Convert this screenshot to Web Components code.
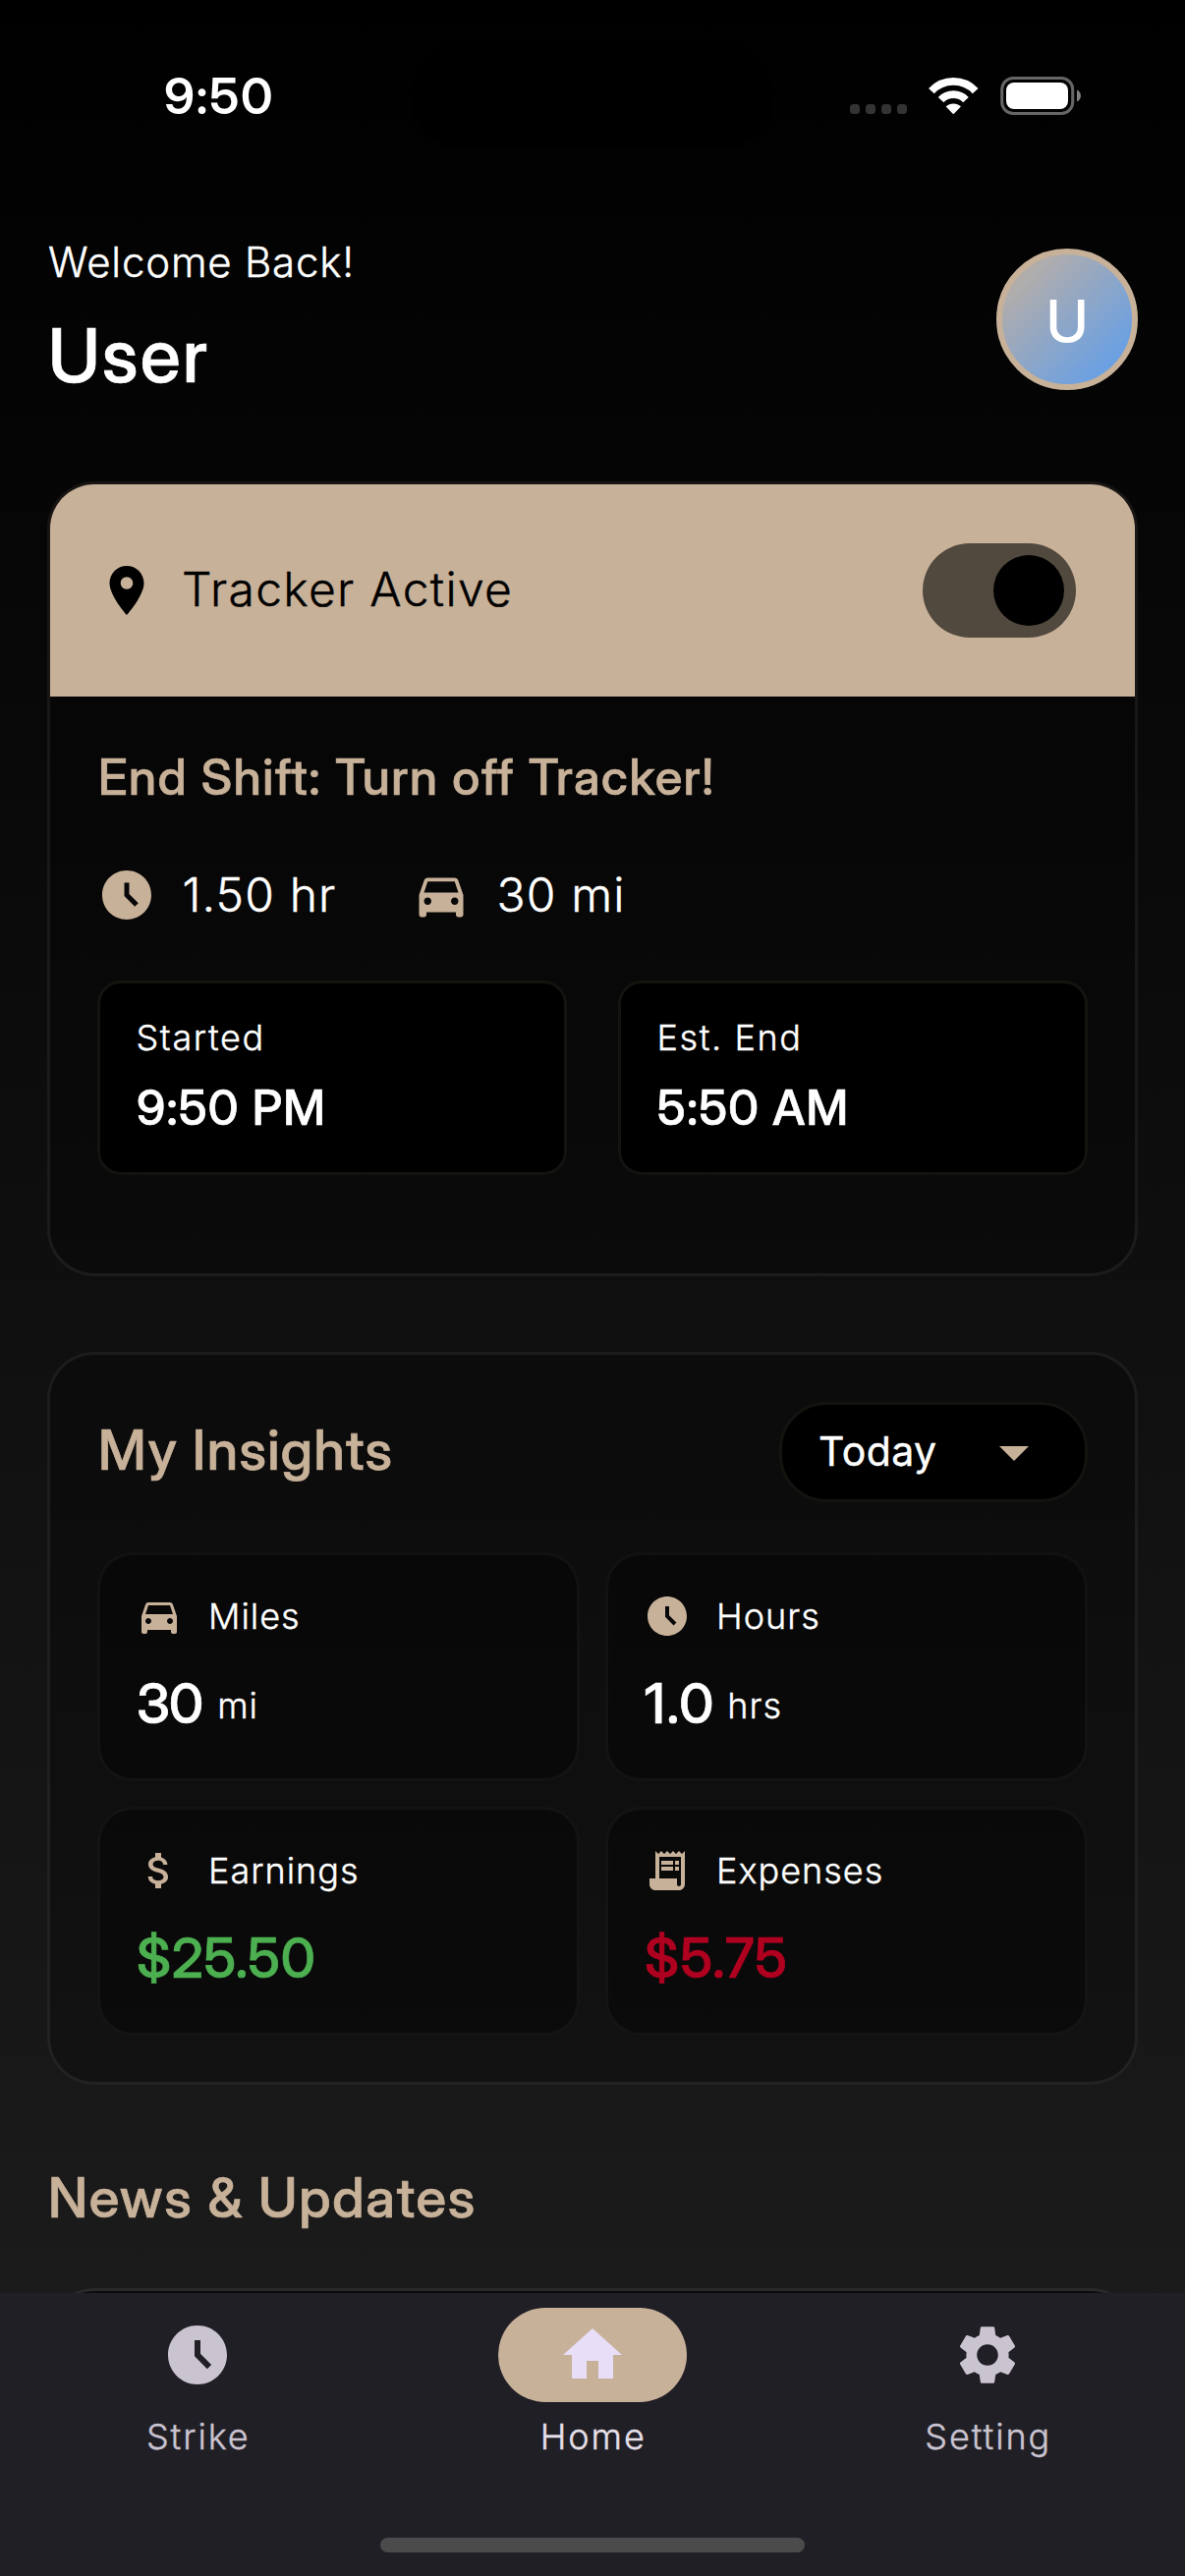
<!DOCTYPE html>
<html lang="en">
<head>
<meta charset="utf-8">
<title>Shift Tracker</title>
<style>
html,body{margin:0;padding:0;background:#000}
body{width:1206px;height:2622px;overflow:hidden;font-family:"Inter Display",Inter,"Liberation Sans",sans-serif;color:#fff;
--tan:#c8b199;--line:rgba(200,177,153,.1);--text:Inter,"Liberation Sans",sans-serif;--stroke:.4px currentColor}
</style>
</head>
<body>
<home-screen></home-screen>
<script>
const define=(name,html)=>customElements.define(name,class extends HTMLElement{
  connectedCallback(){
    if(this.shadowRoot)return;
    const t=document.createElement('template');
    t.innerHTML=typeof html==='function'?html(this):html;
    this.attachShadow({mode:'open'}).append(t.content.cloneNode(true));
  }
});

const ICONS={
  place:'M12 2C8.13 2 5 5.13 5 9c0 5.25 7 13 7 13s7-7.75 7-13c0-3.87-3.13-7-7-7zm0 9.5c-1.38 0-2.5-1.12-2.5-2.5s1.12-2.5 2.5-2.5 2.5 1.12 2.5 2.5-1.12 2.5-2.5 2.5z',
  clock:'M11.99 2C6.47 2 2 6.48 2 12s4.47 10 9.99 10C17.52 22 22 17.52 22 12S17.52 2 11.99 2zm3.3 14.71L11 12.41V7h2v4.59l3.71 3.71-1.42 1.41z',
  car:'M18.92 6.01C18.72 5.42 18.16 5 17.5 5h-11c-.66 0-1.21.42-1.42 1.01L3 12v8c0 .55.45 1 1 1h1c.55 0 1-.45 1-1v-1h12v1c0 .55.45 1 1 1h1c.55 0 1-.45 1-1v-8l-2.08-5.99zM6.5 16c-.83 0-1.5-.67-1.5-1.5S5.67 13 6.5 13s1.5.67 1.5 1.5S7.33 16 6.5 16zm11 0c-.83 0-1.5-.67-1.5-1.5s.67-1.5 1.5-1.5 1.5.67 1.5 1.5-.67 1.5-1.5 1.5zM5 11l1.5-4.5h11L19 11H5z',
  dollar:'M11.8 10.9c-2.27-.59-3-1.2-3-2.15 0-1.09 1.01-1.85 2.7-1.85 1.78 0 2.44.85 2.5 2.1h2.21c-.07-1.72-1.12-3.3-3.21-3.81V3h-3v2.16c-1.94.42-3.5 1.68-3.5 3.61 0 2.31 1.91 3.46 4.7 4.13 2.5.6 3 1.48 3 2.41 0 .69-.49 1.79-2.7 1.79-2.06 0-2.87-.92-2.98-2.1h-2.2c.12 2.19 1.76 3.42 3.68 3.83V21h3v-2.15c1.95-.37 3.5-1.5 3.5-3.55 0-2.84-2.43-3.81-4.7-4.4z',
  receipt:'M19.5 3.5L18 2l-1.5 1.5L15 2l-1.5 1.5L12 2l-1.5 1.5L9 2 7.5 3.5 6 2v14H3v3c0 1.66 1.34 3 3 3h12c1.66 0 3-1.34 3-3V2l-1.5 1.5zM19 19c0 .55-.45 1-1 1s-1-.45-1-1v-3H8V5h11v14zM9 7h6v2H9zM16 7h2v2h-2zM9 10h6v2H9zM16 10h2v2h-2z',
  home:'M10 20v-6h4v6h5v-8h3L12 3 2 12h3v8z',
  settings:'M19.14 12.94c.04-.3.06-.61.06-.94 0-.32-.02-.64-.07-.94l2.03-1.58c.18-.14.23-.41.12-.61l-1.92-3.32c-.12-.22-.37-.29-.59-.22l-2.39.96c-.5-.38-1.03-.7-1.62-.94l-.36-2.54c-.04-.24-.24-.41-.48-.41h-3.84c-.24 0-.43.17-.47.41l-.36 2.54c-.59.24-1.13.57-1.62.94l-2.39-.96c-.22-.08-.47 0-.59.22L2.74 8.87c-.12.21-.08.47.12.61l2.03 1.58c-.05.3-.09.63-.09.94s.02.64.07.94l-2.03 1.58c-.18.14-.23.41-.12.61l1.92 3.32c.12.22.37.29.59.22l2.39-.96c.5.38 1.03.7 1.62.94l.36 2.54c.05.24.24.41.48.41h3.84c.24 0 .44-.17.47-.41l.36-2.54c.59-.24 1.13-.56 1.62-.94l2.39.96c.22.08.47 0 .59-.22l1.92-3.32c.12-.22.07-.47-.12-.61l-2.01-1.58zM12 15.6c-1.98 0-3.6-1.62-3.6-3.6s1.62-3.6 3.6-3.6 3.6 1.62 3.6 3.6-1.62 3.6-3.6 3.6z',
  drop:'M7 10l5 5 5-5z'
};

const TEXT='font-family:var(--text);font-weight:300;-webkit-text-stroke:var(--stroke);';
const HEAD='font-weight:500;-webkit-text-stroke:.7px currentColor;';

define('app-icon',el=>`<style>:host{display:block;flex:none;width:${el.getAttribute('size')}px;height:${el.getAttribute('size')}px}svg{display:block;width:100%;height:100%}</style>
<svg viewBox="0 0 24 24"><path fill="currentColor" fill-rule="evenodd" d="${ICONS[el.getAttribute('name')]}"/></svg>`);

define('status-bar',`<style>
:host{display:flex;height:236px;align-items:flex-start}
.l,.r{height:196px;display:flex;align-items:center;box-sizing:border-box}
.l{width:417px;padding-left:167px;font-weight:600;font-size:51px;line-height:60px;letter-spacing:1.6px}
.i{width:371px;height:110px;margin-top:42px;border-radius:55px;background:#000}
.r{padding-left:77px}
svg{display:block}
</style>
<div class="l">9:50</div><div class="i"></div>
<div class="r"><svg width="240" height="42" viewBox="0 0 240 42">
<g fill="#333"><rect x="0" y="29" width="10" height="10" rx="3.5"/><rect x="16" y="29" width="10" height="10" rx="3.5"/><rect x="32" y="29" width="10" height="10" rx="3.5"/><rect x="48" y="29" width="10" height="10" rx="3.5"/></g>
<g fill="none" stroke="#fff" stroke-width="7.8"><path d="M82.9 15.6A30.6 30.6 0 0 1 127.7 15.6"/><path d="M92.6 24.6A17.6 17.6 0 0 1 118 24.6"/></g>
<path fill="#fff" d="M97.7 31.6A10.6 10.6 0 0 1 112.9 31.6L105.9 38.7Q105.3 39.2 104.7 38.7Z"/>
<rect x="154.7" y="2.5" width="72" height="36" rx="11.5" fill="none" stroke="#666" stroke-width="3"/>
<rect x="159" y="7" width="63" height="27" rx="8" fill="#fff"/>
<path fill="#808080" d="M231 14.500c5.300 2.400 5.300 9.600 0 12z"/></svg></div>`);

define('user-avatar',`<style>
:host{display:flex;align-items:center;justify-content:center;box-sizing:border-box;width:144px;height:144px;padding-top:3px;border-radius:50%;border:6px solid var(--tan);
background:linear-gradient(135deg,#c8b199,#559cf4) border-box;font-weight:500;font-size:60px;line-height:72px}
</style><slot></slot>`);

define('welcome-header',`<style>
:host{display:flex;justify-content:space-between;align-items:flex-start;height:254px}
.t{display:flex;flex-direction:column}
.a{${TEXT}font-size:42px;line-height:61px;letter-spacing:.78px;margin-left:1px}
.b{${HEAD}font-size:75px;line-height:90px;letter-spacing:2.1px;margin-top:20px;margin-left:1px}
user-avatar{margin-top:17px}
</style>
<div class="t"><div class="a"><slot name="greeting"></slot></div><div class="b"><slot name="name"></slot></div></div><user-avatar>U</user-avatar>`);

define('toggle-switch',`<style>
:host{display:flex;align-items:center;justify-content:flex-end;box-sizing:border-box;width:156px;height:96px;padding-right:12px;border-radius:48px;background:#51493d}
i{width:72px;height:72px;border-radius:50%;background:#000}
</style><i></i>`);

define('metric-item',el=>`<style>
:host{display:flex;align-items:center;gap:26.5px;${TEXT}font-size:48px;line-height:60px;letter-spacing:1.15px}
app-icon{color:var(--tan)}
</style><app-icon name="${el.getAttribute('icon')}" size="60"></app-icon><span><slot></slot></span>`);

define('time-box',`<style>
:host{display:block;box-sizing:border-box;width:478px;height:198px;padding:33px 36px 0;border:3px solid #151310;border-radius:24px;background:#000}
.a{${TEXT}font-size:36px;line-height:44px;letter-spacing:1.6px;margin-left:.5px}
.b{${HEAD}font-size:49px;line-height:56px;letter-spacing:1.3px;margin:22px 0 0 1px}
</style><div class="a"><slot name="label"></slot></div><div class="b"><slot></slot></div>`);

define('tracker-card',`<style>
:host{display:block;box-sizing:border-box;height:809px;border:3px solid var(--line);border-radius:48px;background:rgba(0,0,0,.25);overflow:hidden}
header{display:flex;align-items:center;box-sizing:border-box;height:216px;padding:0 60px 0 48px;background:var(--tan);color:#000}
.h{${TEXT}flex:1;margin-left:26px;padding-bottom:2px;font-size:48px;line-height:60px;letter-spacing:1.28px}
section{padding:52px 48px 0}
.m{${HEAD}font-size:50px;line-height:60px;letter-spacing:1.65px;margin-left:1px;color:var(--tan)}
.r{display:flex;gap:48px;margin-top:60px}
.r metric-item:first-child{width:272px}
.b{display:flex;justify-content:space-between;margin-top:57px}
</style>
<header><app-icon name="place" size="60"></app-icon><div class="h">Tracker Active</div><toggle-switch></toggle-switch></header>
<section><div class="m">End Shift: Turn off Tracker!</div>
<div class="r"><metric-item icon="clock">1.50 hr</metric-item><metric-item icon="car">30 mi</metric-item></div>
<div class="b"><time-box><span slot="label">Started</span>9:50 PM</time-box><time-box><span slot="label">Est. End</span>5:50 AM</time-box></div></section>`);

define('range-select',`<style>
:host{display:flex;align-items:center;justify-content:space-between;box-sizing:border-box;width:314px;height:102px;padding:0 36px;border:3px solid #151310;border-radius:48px;background:#000}
span{padding:0 0 3px 1px;font-family:var(--text);font-weight:400;-webkit-text-stroke:.4px currentColor;font-size:41px;line-height:50px;letter-spacing:.4px}
app-icon{color:var(--tan)}
</style><span><slot></slot></span><app-icon name="drop" size="72"></app-icon>`);

define('stat-tile',el=>{const ls=el.getAttribute('tracking');return `<style>
:host{display:block;box-sizing:border-box;height:233px;padding:38px 36px 0;border:3px solid rgba(200,177,153,.06);border-radius:36px;background:rgba(0,0,0,.36)}
.a{display:flex;align-items:center;gap:26px;${TEXT}font-size:36px;line-height:48px;letter-spacing:1px}
app-icon{color:var(--tan)}
.b{display:flex;align-items:center;gap:14px;margin-top:35px;padding-left:1px;${HEAD}font-size:56px;line-height:60px}
.v{color:${el.getAttribute('tone')||'#fff'};-webkit-text-stroke-color:currentColor;letter-spacing:${ls}px;margin-right:${-ls}px}
.u{${TEXT}padding-top:3px;font-size:36px;line-height:48px;letter-spacing:1px}
</style><div class="a"><app-icon name="${el.getAttribute('icon')}" size="48"></app-icon><slot name="label"></slot></div>
<div class="b"><span class="v"><slot></slot></span><span class="u"><slot name="unit"></slot></span></div>`});

define('insights-card',`<style>
:host{display:block;box-sizing:border-box;height:746px;margin-top:77px;padding:48px 48px 0;border:3px solid var(--line);border-radius:48px;background:rgba(0,0,0,.25)}
.h{display:flex;align-items:center;justify-content:space-between}
.t{${HEAD}font-size:56px;line-height:70px;letter-spacing:1.35px;padding:0 0 4px 1px;color:var(--tan)}
.g{display:grid;grid-template-columns:1fr 1fr;gap:26px;margin-top:51px}
</style>
<div class="h"><div class="t">My Insights</div><range-select>Today</range-select></div>
<div class="g">
<stat-tile icon="car" tracking="-.8"><span slot="label">Miles</span>30<span slot="unit">mi</span></stat-tile>
<stat-tile icon="clock" tracking="1.6"><span slot="label">Hours</span>1.0<span slot="unit">hrs</span></stat-tile>
<stat-tile icon="dollar" tone="#4caf50" tracking="0.65"><span slot="label">Earnings</span>$25.50</stat-tile>
<stat-tile icon="receipt" tone="#b00020" tracking="1.3"><span slot="label">Expenses</span>$5.75</stat-tile>
</div>`);

define('news-section',`<style>
:host{display:block;margin-top:80px}
.t{${HEAD}font-size:56px;line-height:70px;letter-spacing:1.75px;margin-left:1px;color:var(--tan)}
.c{box-sizing:border-box;height:400px;margin-top:57px;border:3px solid var(--line);border-radius:48px;background:#0c0c0c;background-clip:padding-box}
</style><div class="t">News &amp; Updates</div><div class="c"></div>`);

define('nav-item',el=>{const on=el.hasAttribute('active');return `<style>
:host{display:flex;flex:1;flex-direction:column;align-items:center;color:${on?'#e6e0e9':'#cac4d0'}}
.p{display:flex;align-items:center;justify-content:center;width:192px;height:96px;border-radius:48px;${on?'background:var(--tan);color:#e8def8':''}}
.l{${TEXT}margin-top:13px;padding-left:1.500px;font-size:36px;line-height:44px;letter-spacing:1.9px}
</style><div class="p"><app-icon name="${el.getAttribute('icon')}" size="72"></app-icon></div><div class="l"><slot></slot></div>`});

define('bottom-nav',`<style>
:host{display:flex;flex-direction:column;flex:none;box-sizing:border-box;height:288px;padding-top:15px;background:#211f26}
.n{display:flex}
.i{width:432px;height:15px;margin:81px auto 0;border-radius:8px;background:#4b4b4b}
</style><div class="n"><nav-item icon="clock">Strike</nav-item><nav-item icon="home" active>Home</nav-item><nav-item icon="settings">Setting</nav-item></div><div class="i"></div>`);

define('home-screen',`<style>
:host{display:flex;flex-direction:column;width:1206px;height:2622px;background:linear-gradient(#000,#1e1e1e)}
main{flex:1;min-height:0;overflow:hidden}
.c{padding:0 48px}
</style><main><status-bar></status-bar><div class="c">
<welcome-header><span slot="greeting">Welcome Back!</span><span slot="name">User</span></welcome-header>
<tracker-card></tracker-card><insights-card></insights-card><news-section></news-section></div></main><bottom-nav></bottom-nav>`);
</script>
</body>
</html>
